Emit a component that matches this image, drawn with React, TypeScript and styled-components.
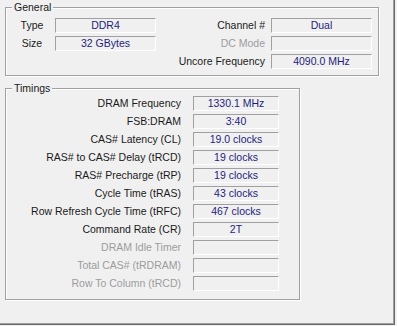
import React from 'react';
import styled, { createGlobalStyle } from 'styled-components';

const GlobalStyle = createGlobalStyle`
  html, body {
    margin: 0;
    padding: 0;
    background: #f0f0f0;
  }
  body {
    font-family: "Liberation Sans", Arial, sans-serif;
    font-size: 10.5px;
  }
`;

const Page = styled.div`
  width: 395px;
  height: 325px;
  box-sizing: border-box;
  padding: 7px 0 0 5px;
  background: #f0f0f0;
  box-shadow: inset -1px -1px 0 #696969, inset -2px -2px 0 #a0a0a0;
`;

const GroupBox = styled.div<{ $width: number }>`
  position: relative;
  width: ${p => p.$width}px;
  box-sizing: border-box;
  border: 1px solid #a0a0a0;
  box-shadow: 1px 1px 0 #fff, inset 1px 1px 0 #fff;
  & + & {
    margin-top: 12px;
  }
`;

const Caption = styled.span`
  position: absolute;
  top: -7px;
  left: 6px;
  padding: 0 2px;
  line-height: 13px;
  background: #f0f0f0;
  color: #1a1a1a;
`;

const GeneralGrid = styled.div`
  display: grid;
  grid-template-columns: 34px 101px 1fr 101px;
  column-gap: 6px;
  row-gap: 3px;
  padding: 10px 6px 6px 9px;
`;

const TimingsGrid = styled.div`
  display: grid;
  grid-template-columns: 1fr 86px;
  column-gap: 12px;
  row-gap: 3px;
  padding: 7px 20px 8px 6px;
`;

const Label = styled.div<{ $align?: 'center' | 'right'; $disabled?: boolean }>`
  height: 15px;
  line-height: 15px;
  white-space: nowrap;
  text-align: ${p => p.$align ?? 'right'};
  color: ${p => (p.$disabled ? '#9c9c9c' : '#1a1a1a')};
`;

const Value = styled.div`
  height: 15px;
  box-sizing: border-box;
  border-top: 1px solid #a0a0a0;
  border-left: 1px solid #a0a0a0;
  border-bottom: 1px solid #fff;
  border-right: 1px solid #fff;
  line-height: 13px;
  text-align: center;
  white-space: nowrap;
  color: #1e1e7c;
`;

const timings: { label: string; value: string; disabled?: boolean }[] = [
  { label: 'DRAM Frequency', value: '1330.1 MHz' },
  { label: 'FSB:DRAM', value: '3:40' },
  { label: 'CAS# Latency (CL)', value: '19.0 clocks' },
  { label: 'RAS# to CAS# Delay (tRCD)', value: '19 clocks' },
  { label: 'RAS# Precharge (tRP)', value: '19 clocks' },
  { label: 'Cycle Time (tRAS)', value: '43 clocks' },
  { label: 'Row Refresh Cycle Time (tRFC)', value: '467 clocks' },
  { label: 'Command Rate (CR)', value: '2T' },
  { label: 'DRAM Idle Timer', value: '', disabled: true },
  { label: 'Total CAS# (tRDRAM)', value: '', disabled: true },
  { label: 'Row To Column (tRCD)', value: '', disabled: true },
];

export default function App() {
  return (
    <>
      <GlobalStyle />
      <Page>
        <GroupBox $width={374}>
          <Caption>General</Caption>
          <GeneralGrid>
            <Label $align="center">Type</Label>
            <Value>DDR4</Value>
            <Label>Channel #</Label>
            <Value>Dual</Value>

            <Label $align="center">Size</Label>
            <Value>32 GBytes</Value>
            <Label $disabled>DC Mode</Label>
            <Value />

            <div />
            <div />
            <Label>Uncore Frequency</Label>
            <Value>4090.0 MHz</Value>
          </GeneralGrid>
        </GroupBox>

        <GroupBox $width={295}>
          <Caption>Timings</Caption>
          <TimingsGrid>
            {timings.map(t => (
              <React.Fragment key={t.label}>
                <Label $disabled={t.disabled}>{t.label}</Label>
                <Value>{t.value}</Value>
              </React.Fragment>
            ))}
          </TimingsGrid>
        </GroupBox>
      </Page>
    </>
  );
}
